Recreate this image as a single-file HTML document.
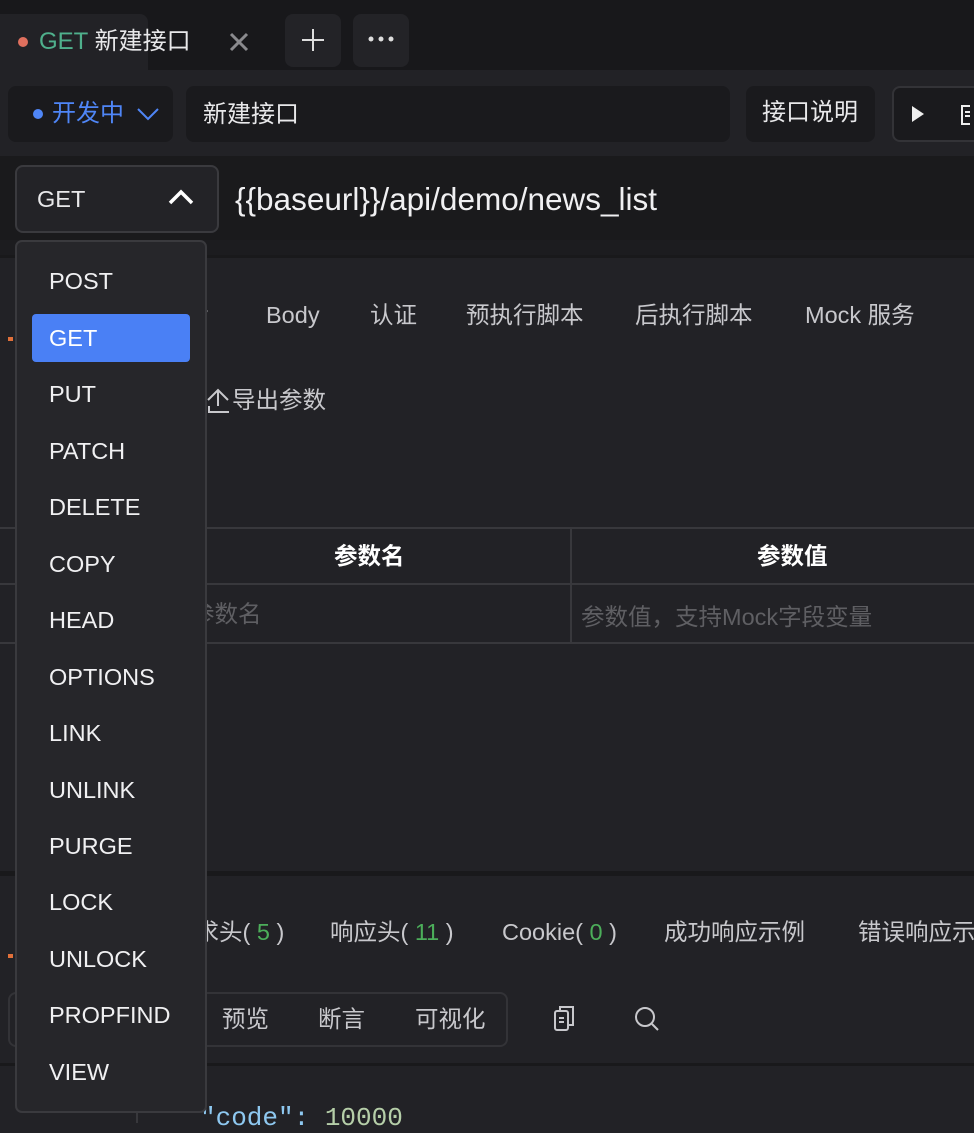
<!DOCTYPE html>
<html><head><meta charset="utf-8"><style>
*{margin:0;padding:0;box-sizing:border-box}
body{width:974px;height:1123px;overflow:hidden;background:#222226;font-family:"Liberation Sans","Noto Sans CJK SC",sans-serif;color:#d8d8da;position:relative}
.a{position:absolute}
.t{font-size:23.5px;white-space:nowrap;line-height:30px;height:30px}
.d{font-size:23.5px;white-space:nowrap;line-height:30px;height:30px;left:49px;color:#f0f0f2}
</style></head><body>
<!-- top bar -->
<div class="a" style="left:0;top:0;width:974px;height:70px;background:#18181b"></div>
<div class="a" style="left:0;top:14px;width:148px;height:56px;background:#222226;border-radius:0 8px 0 0"></div>
<div class="a" style="left:18px;top:37px;width:10px;height:10px;border-radius:50%;background:#e0705e"></div>
<div class="a t" style="left:39px;top:27px;color:#4fb08c;font-size:24px">GET <span style="color:#e8e8ea">新建接口</span></div>
<svg class="a" style="left:229px;top:32px" width="20" height="20"><path d="M2 2 L18 18 M18 2 L2 18" stroke="#8a8a8e" stroke-width="3"/></svg>
<div class="a" style="left:285px;top:14px;width:56px;height:53px;background:#232327;border-radius:8px"></div>
<svg class="a" style="left:302px;top:29px" width="22" height="22"><path d="M11 0 V22 M0 11 H22" stroke="#ddd" stroke-width="2"/></svg>
<div class="a" style="left:353px;top:14px;width:56px;height:53px;background:#232327;border-radius:8px"></div>
<svg class="a" style="left:368px;top:36px" width="26" height="6"><circle cx="3" cy="3" r="2.5" fill="#ddd"/><circle cx="13" cy="3" r="2.5" fill="#ddd"/><circle cx="23" cy="3" r="2.5" fill="#ddd"/></svg>
<!-- row2 -->
<div class="a" style="left:8px;top:86px;width:165px;height:56px;background:#1a1a1d;border-radius:8px"></div>
<div class="a" style="left:33px;top:109px;width:10px;height:10px;border-radius:50%;background:#4f86f7"></div>
<div class="a t" style="left:52px;top:99px;color:#4f86f7;font-size:24px">开发中</div>
<svg class="a" style="left:136px;top:106px" width="24" height="16"><path d="M2 3 L12 13 L22 3" stroke="#4f86f7" stroke-width="2" fill="none"/></svg>
<div class="a" style="left:186px;top:86px;width:544px;height:56px;background:#1a1a1d;border-radius:8px"></div>
<div class="a t" style="left:203px;top:100px;color:#e8e8ea;font-size:24px">新建接口</div>
<div class="a" style="left:746px;top:86px;width:129px;height:56px;background:#1a1a1d;border-radius:8px"></div>
<div class="a t" style="left:762px;top:98px;color:#e8e8ea;font-size:24px">接口说明</div>
<div class="a" style="left:892px;top:86px;width:100px;height:56px;background:#1a1a1d;border:2px solid #333337;border-radius:8px"></div>
<svg class="a" style="left:910px;top:104px" width="60" height="22"><path d="M2 2 L14 10 L2 18Z" fill="#eee"/><rect x="52" y="2" width="12" height="18" stroke="#eee" stroke-width="2" fill="none"/><path d="M55 8h6M55 12h6" stroke="#eee" stroke-width="2"/></svg>
<!-- url row -->
<div class="a" style="left:0;top:156px;width:974px;height:84px;background:#1a1a1c"></div>
<div class="a" style="left:15px;top:165px;width:204px;height:68px;background:#232327;border:2px solid #3a3a3e;border-radius:8px"></div>
<div class="a t" style="left:37px;top:184px;color:#e8e8ea">GET</div>
<svg class="a" style="left:167px;top:188px" width="28" height="18"><path d="M3 15 L14 4 L25 15" stroke="#fff" stroke-width="3.5" fill="none"/></svg>
<div class="a" style="left:235px;top:180px;font-size:31.5px;line-height:38px;color:#f0f0f2;white-space:nowrap">{{baseurl}}/api/demo/news_list</div>
<div class="a" style="left:0;top:240px;width:974px;height:18px;background:#1c1c1f"></div>
<div class="a" style="left:0;top:255px;width:974px;height:3px;background:#19191b"></div>
<!-- tabs -->
<div class="a" style="left:8px;top:337px;width:5px;height:4px;background:#e0703a"></div>
<div class="a t" style="left:196px;top:300px;color:#c8c8cc">y</div>
<div class="a t" style="left:266px;top:300px;color:#c8c8cc">Body</div>
<div class="a t" style="left:370px;top:300px;color:#c8c8cc">认证</div>
<div class="a t" style="left:466px;top:300px;color:#c8c8cc">预执行脚本</div>
<div class="a t" style="left:635px;top:300px;color:#c8c8cc">后执行脚本</div>
<div class="a t" style="left:805px;top:300px;color:#c8c8cc">Mock 服务</div>
<svg class="a" style="left:206px;top:388px" width="26" height="26"><path d="M2 12 L12 2 L22 12 M12 2 V18 M3 18 V24 H23" stroke="#c8c8cc" stroke-width="2" fill="none"/></svg>
<div class="a t" style="left:232px;top:385px;color:#c8c8cc">导出参数</div>
<!-- table -->
<div class="a" style="left:0;top:527px;width:974px;height:2px;background:#38383c"></div>
<div class="a" style="left:0;top:583px;width:974px;height:2px;background:#38383c"></div>
<div class="a" style="left:0;top:642px;width:974px;height:2px;background:#38383c"></div>
<div class="a" style="left:570px;top:528px;width:2px;height:115px;background:#38383c"></div>
<div class="a t" style="left:334px;top:541px;color:#fff;font-weight:bold">参数名</div>
<div class="a t" style="left:757px;top:541px;color:#fff;font-weight:bold">参数值</div>
<div class="a t" style="left:191px;top:599px;color:#5f5f63">参数名</div>
<div class="a t" style="left:581px;top:602px;color:#5f5f63">参数值，支持Mock字段变量</div>
<!-- bottom -->
<div class="a" style="left:0;top:871px;width:974px;height:5px;background:#19191b"></div>
<div class="a" style="left:8px;top:954px;width:5px;height:4px;background:#e0703a"></div>
<div class="a t" style="left:172px;top:917px;color:#c8c8cc">请求头(<span style="color:#4cae5a"> 5 </span>)</div>
<div class="a t" style="left:330px;top:917px;color:#c8c8cc">响应头(<span style="color:#4cae5a"> 11 </span>)</div>
<div class="a t" style="left:502px;top:917px;color:#c8c8cc">Cookie(<span style="color:#4cae5a"> 0 </span>)</div>
<div class="a t" style="left:664px;top:917px;color:#c8c8cc">成功响应示例</div>
<div class="a t" style="left:858px;top:917px;color:#c8c8cc">错误响应示例</div>
<div class="a" style="left:8px;top:992px;width:500px;height:55px;border:2px solid #333337;border-radius:8px"></div>
<div class="a t" style="left:222px;top:1004px;color:#c8c8cc">预览</div>
<div class="a t" style="left:318px;top:1004px;color:#c8c8cc">断言</div>
<div class="a t" style="left:415px;top:1004px;color:#c8c8cc">可视化</div>
<svg class="a" style="left:553px;top:1005px" width="24" height="28"><rect x="2" y="6" width="13" height="19" rx="2" stroke="#c8c8cc" stroke-width="2" fill="none"/><path d="M7 6 V2 H20 V20 H15 M6 13h5M6 17h5" stroke="#c8c8cc" stroke-width="2" fill="none"/></svg>
<svg class="a" style="left:633px;top:1005px" width="28" height="28"><circle cx="12" cy="12" r="9" stroke="#c8c8cc" stroke-width="2" fill="none"/><path d="M19 19 L25 25" stroke="#c8c8cc" stroke-width="2"/></svg>
<div class="a" style="left:0;top:1063px;width:974px;height:3px;background:#19191b"></div>
<div class="a" style="left:136px;top:1098px;width:2px;height:25px;background:#38383c"></div>
<div class="a" style="left:200px;top:1103px;font-family:'Liberation Mono',monospace;font-size:26px;color:#8ec8f0;white-space:nowrap">"code": <span style="color:#b5cea8">10000</span></div>
<!-- dropdown -->
<div class="a" style="left:15px;top:240px;width:192px;height:873px;background:#26262a;border:2px solid #3a3a3e;border-radius:7px"></div>
<div class="a" style="left:32px;top:314px;width:158px;height:48px;background:#4a80f5;border-radius:4px"></div>
<div class="a d" style="top:266px">POST</div>
<div class="a d" style="top:323px;color:#fff">GET</div>
<div class="a d" style="top:379px">PUT</div>
<div class="a d" style="top:436px">PATCH</div>
<div class="a d" style="top:492px">DELETE</div>
<div class="a d" style="top:549px">COPY</div>
<div class="a d" style="top:605px">HEAD</div>
<div class="a d" style="top:662px">OPTIONS</div>
<div class="a d" style="top:718px">LINK</div>
<div class="a d" style="top:775px">UNLINK</div>
<div class="a d" style="top:831px">PURGE</div>
<div class="a d" style="top:887px">LOCK</div>
<div class="a d" style="top:944px">UNLOCK</div>
<div class="a d" style="top:1000px">PROPFIND</div>
<div class="a d" style="top:1057px">VIEW</div>
</body></html>
